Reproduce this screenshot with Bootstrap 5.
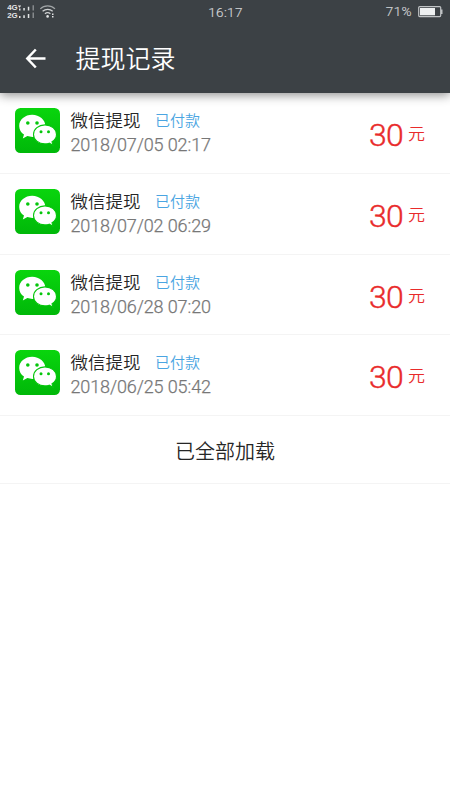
<!DOCTYPE html>
<html lang="zh-CN">
<head>
<meta charset="utf-8">
<meta name="viewport" content="width=device-width, initial-scale=1">
<title>提现记录</title>
<link rel="stylesheet" href="https://cdn.jsdelivr.net/npm/bootstrap@5.3.0/dist/css/bootstrap.min.css">
<style>
  body { font-family: Roboto, "Noto Sans CJK SC", sans-serif; color: #262626; background: #fff; overflow: hidden; }
  .topbar { height: 93px; background: #3c4145; box-shadow: 0 2px 10px rgba(0,0,0,.45); color: #fff; }
  .statusbar { height: 24px; color: #d0d2d4; font-size: 13.5px; line-height: 25px; padding: 0 7px; }
  .statusbar > * { flex: 1 1 0; }
  .clock { font-weight: 300; letter-spacing: .35px; padding-left: 1px; -webkit-text-stroke: .2px; }
  .charge { font-weight: 300; letter-spacing: .4px; line-height: 23px; -webkit-text-stroke: .2px; }
  .titlebar { height: 69px; padding-left: 25px; gap: 29.5px; }
  .page-title { font-size: 25px; line-height: 36px; font-weight: 350; padding-top: 2px; }
  .record { height: 80.8px; border-bottom: 1px solid #f4f4f4; padding: 15px 25px 0 15px; }
  .record-info { margin-left: 10.5px; padding-top: 1px; }
  .record-name { font-size: 17.5px; line-height: 24px; font-weight: 350; }
  .record-state { font-size: 15px; line-height: 24px; color: #4aa5e2; margin-left: 14.5px; font-weight: 350; }
  .record-time { font-size: 18px; line-height: 24px; color: #777; font-weight: 300; letter-spacing: -.12px; -webkit-text-stroke: .25px #777; }
  .record-sum { color: #e92b2b; margin-top: 3px; height: 48px; }
  .sum-value { font-size: 32px; line-height: 48px; font-weight: 300; letter-spacing: -.8px; -webkit-text-stroke: .4px #e92b2b; }
  .sum-unit { font-size: 17px; line-height: 46px; margin-left: 5px; font-weight: 350; }
  .list-end { height: 67.800px; border-bottom: 1px solid #f4f4f4; font-size: 20px; font-weight: 350; padding-top: 4px; }
</style>
</head>
<body>
<svg width="0" height="0" class="position-absolute">
  <linearGradient id="green" x1="0" y1="0" x2="0" y2="1"><stop offset="0" stop-color="#09d50d"/><stop offset="1" stop-color="#00b809"/></linearGradient>
  <symbol id="wechat" viewBox="0 0 45 45">
    <rect width="45" height="45" rx="5.5" fill="url(#green)"/>
    <path fill="#fff" d="M17.2 6.800C10 6.800 4.200 11.700 4.200 17.900c0 3.500 1.800 6.600 4.800 8.700l-1.200 3.900 4.600-2.400c1.600.5 3.200.8 5 .8 7.200 0 12.900-4.900 12.900-11S24.400 6.800 17.200 6.800Z"/>
    <path fill="#fff" stroke="#04c70b" stroke-width="1.100" d="M30 16.900c-6.400 0-11.500 4.200-11.500 9.500s5.100 9.500 11.500 9.500c1.500 0 2.900-.2 4.200-.7l3.900 2.100-1.100-3.500c2.800-1.800 4.500-4.300 4.500-7.400 0-5.300-5.100-9.500-11.500-9.500Z"/>
    <g fill="#05c60c"><circle cx="12.800" cy="15" r="1.800"/><circle cx="22" cy="15" r="1.800"/><circle cx="26" cy="23.700" r="1.500"/><circle cx="33.500" cy="23.700" r="1.500"/></g>
  </symbol>
</svg>

<header class="topbar position-relative">
  <div class="statusbar d-flex">
    <div class="d-flex">
      <svg width="50" height="24" viewBox="7 0 50 24" font-family="Liberation Sans" font-weight="bold" font-size="6.600" fill="#e2e4e5">
        <text x="7.200" y="10.400" textLength="10.500" lengthAdjust="spacingAndGlyphs">4G</text><text x="7.200" y="18" textLength="10.500" lengthAdjust="spacingAndGlyphs">2G</text>
        <path d="M18 5.500h3v1h-1v1h-1v-1h-1zM19 8.500h1.500v2H19zM19 16h1.500v2H19zM23.300 8h1.500v2.500h-1.500zM23.300 15.200h1.500V18h-1.500zM27.800 6.800h1.500v3.700h-1.500zM27.800 14h1.500v4h-1.500z"/>
        <path fill="#85898c" d="M32.500 5.200H34v5.300h-1.500zM32.500 12.500H34V18h-1.500z"/>
        <g fill="none" stroke="#d0d2d3" stroke-width="1.200"><path stroke="#a0a4a6" d="M40.300 8.800c4-4 10.700-4 14.700 0"/><path d="M42.600 11.300c3-2.700 7.200-2.700 10.100 0M44.900 13.800c1.700-1.400 3.800-1.400 5.500 0"/></g>
        <circle cx="47.600" cy="16.400" r="1.300"/><path d="M52 13.500h1.500V15H52zM52 16h1.500v1.500H52z"/>
      </svg>
    </div>
    <div class="clock text-center">16:17</div>
    <div class="charge d-flex justify-content-end">
      <span>71%</span>
      <svg class="ms-1" width="27" height="24" viewBox="0 0 27 24">
        <rect x="2.700" y="6.600" width="22" height="10" rx="1" fill="none" stroke="#c0c3c5" stroke-width="1.200"/>
        <path fill="#eef0f1" d="M4 8h15v7.300H4z"/><path fill="#c0c3c5" d="M25 9.500h1.500v4.500H25z"/>
      </svg>
    </div>
  </div>
  <div class="titlebar d-flex align-items-center">
    <svg width="21" height="22" viewBox="0 0 21 22" fill="none" stroke="#fff" stroke-width="2.500"><path d="M10.800 1.500 2.300 10.500l8.500 9M2.300 10.500H20.500"/></svg>
    <h1 class="page-title mb-0">提现记录</h1>
  </div>
</header>

<main>
  <div class="record d-flex">
    <svg width="45" height="45"><use href="#wechat"/></svg>
    <div class="record-info"><div class="d-flex"><span class="record-name">微信提现</span><span class="record-state">已付款</span></div><div class="record-time">2018/07/05 02:17</div></div>
    <div class="record-sum d-flex ms-auto"><span class="sum-value">30</span><span class="sum-unit">元</span></div>
  </div>
  <div class="record d-flex">
    <svg width="45" height="45"><use href="#wechat"/></svg>
    <div class="record-info"><div class="d-flex"><span class="record-name">微信提现</span><span class="record-state">已付款</span></div><div class="record-time">2018/07/02 06:29</div></div>
    <div class="record-sum d-flex ms-auto"><span class="sum-value">30</span><span class="sum-unit">元</span></div>
  </div>
  <div class="record d-flex">
    <svg width="45" height="45"><use href="#wechat"/></svg>
    <div class="record-info"><div class="d-flex"><span class="record-name">微信提现</span><span class="record-state">已付款</span></div><div class="record-time">2018/06/28 07:20</div></div>
    <div class="record-sum d-flex ms-auto"><span class="sum-value">30</span><span class="sum-unit">元</span></div>
  </div>
  <div class="record d-flex">
    <svg width="45" height="45"><use href="#wechat"/></svg>
    <div class="record-info"><div class="d-flex"><span class="record-name">微信提现</span><span class="record-state">已付款</span></div><div class="record-time">2018/06/25 05:42</div></div>
    <div class="record-sum d-flex ms-auto"><span class="sum-value">30</span><span class="sum-unit">元</span></div>
  </div>
  <div class="list-end d-flex align-items-center justify-content-center">已全部加载</div>
</main>
<script src="https://cdn.jsdelivr.net/npm/bootstrap@5.3.0/dist/js/bootstrap.bundle.min.js"></script>
</body>
</html>
